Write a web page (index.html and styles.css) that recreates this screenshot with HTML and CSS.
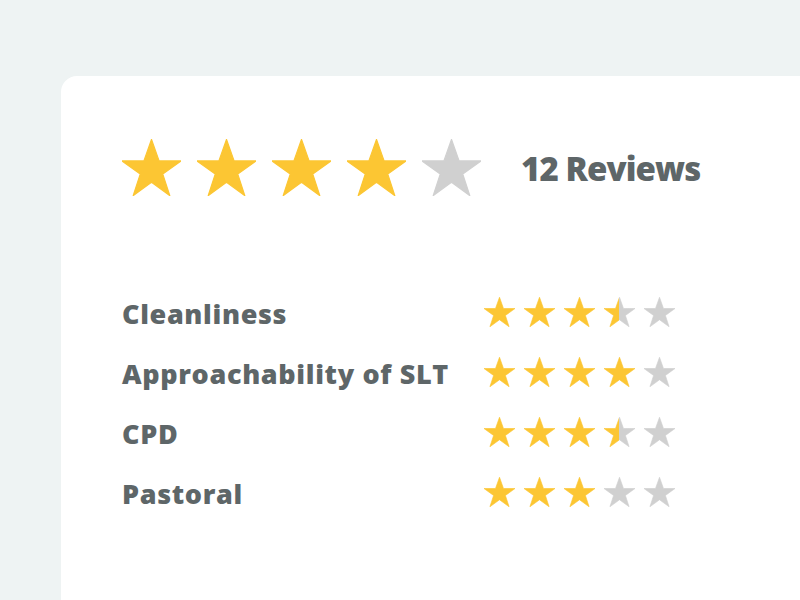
FILE: index.html
```html
<!DOCTYPE html>
<html lang="en">
<head>
    <meta charset="UTF-8">
    <meta name="viewport" content="width=device-width, initial-scale=1.0">
    <title>Reviews</title>
    <link rel="stylesheet" href="styles.css">
</head>
<body>
    <!-- Shared star shape and half-fill gradient -->
    <svg class="defs" width="0" height="0">
        <defs>
            <symbol id="star" viewBox="0 0 95.1 90.45">
                <polygon points="47.55,0 59.78,34.55 95.1,34.55 65.71,55.9 76.94,90.45 47.55,69.1 18.16,90.45 29.39,55.9 0,34.55 35.32,34.55" stroke-linejoin="round" stroke-width="2"/>
            </symbol>
            <linearGradient id="half" x1="0" x2="1" y1="0" y2="0">
                <stop offset="50%" stop-color="#fcc633"/>
                <stop offset="50%" stop-color="#d0d0d0"/>
            </linearGradient>
        </defs>
    </svg>

    <div class="card">
        <!-- Overall rating -->
        <div class="summary">
            <div class="stars big">
                <svg class="on"><use href="#star"/></svg>
                <svg class="on"><use href="#star"/></svg>
                <svg class="on"><use href="#star"/></svg>
                <svg class="on"><use href="#star"/></svg>
                <svg class="off"><use href="#star"/></svg>
            </div>
            <div class="count">12 Reviews</div>
        </div>

        <!-- Category ratings -->
        <ul class="ratings">
            <li>
                <span class="label">Cleanliness</span>
                <div class="stars small">
                    <svg class="on"><use href="#star"/></svg>
                    <svg class="on"><use href="#star"/></svg>
                    <svg class="on"><use href="#star"/></svg>
                    <svg class="half"><use href="#star"/></svg>
                    <svg class="off"><use href="#star"/></svg>
                </div>
            </li>
            <li>
                <span class="label">Approachability of SLT</span>
                <div class="stars small">
                    <svg class="on"><use href="#star"/></svg>
                    <svg class="on"><use href="#star"/></svg>
                    <svg class="on"><use href="#star"/></svg>
                    <svg class="on"><use href="#star"/></svg>
                    <svg class="off"><use href="#star"/></svg>
                </div>
            </li>
            <li>
                <span class="label">CPD</span>
                <div class="stars small">
                    <svg class="on"><use href="#star"/></svg>
                    <svg class="on"><use href="#star"/></svg>
                    <svg class="on"><use href="#star"/></svg>
                    <svg class="half"><use href="#star"/></svg>
                    <svg class="off"><use href="#star"/></svg>
                </div>
            </li>
            <li>
                <span class="label">Pastoral</span>
                <div class="stars small">
                    <svg class="on"><use href="#star"/></svg>
                    <svg class="on"><use href="#star"/></svg>
                    <svg class="on"><use href="#star"/></svg>
                    <svg class="off"><use href="#star"/></svg>
                    <svg class="off"><use href="#star"/></svg>
                </div>
            </li>
        </ul>
    </div>
</body>
</html>
```

FILE: styles.css
```css
body {
    font-family: "Open Sans", "Liberation Sans", sans-serif;
    font-weight: 800;
    background-color: #eef3f3;
    color: #5e6668;
    margin: 0;
    padding: 76px 0 0 61px;
    overflow: hidden;
}

.defs {
    position: absolute;
}

.card {
    background-color: #fff;
    border-radius: 16px 0 0 0;
    padding: 63px 0 0 61px;
    height: 461px;
}

.summary {
    display: flex;
    align-items: center;
}

.stars {
    display: flex;
}

.stars svg {
    display: block;
}

.stars.big {
    gap: 16px;
}

.stars.big svg {
    width: 59px;
    height: 57px;
}

.stars.small {
    gap: 9px;
}

.stars.small svg {
    width: 31px;
    height: 30px;
}

.on {
    fill: #fcc633;
    stroke: #fcc633;
}

.off {
    fill: #d0d0d0;
    stroke: #d0d0d0;
}

.half {
    fill: url(#half);
    stroke: url(#half);
}

.count {
    margin-left: 40px;
    font-size: 33px;
    letter-spacing: -0.9px;
    padding-top: 2px;
}

.ratings {
    list-style: none;
    margin: 86px 0 0 0;
    padding: 0;
}

.ratings li {
    display: flex;
    align-items: center;
    height: 60px;
}

.label {
    width: 362px;
    font-size: 27px;
    letter-spacing: 0.65px;
    padding-top: 3px;
}
```
